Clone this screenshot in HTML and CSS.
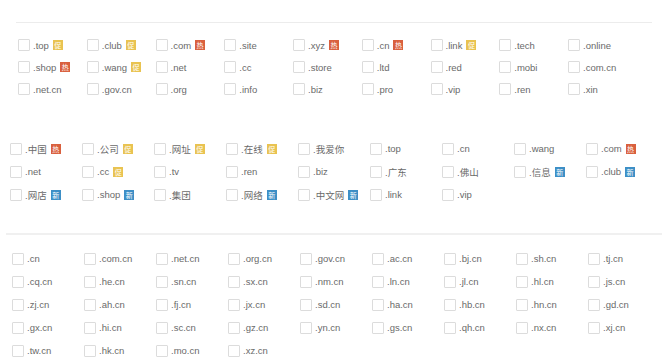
FILE: index.html
```html
<!DOCTYPE html>
<html lang="zh-CN">
<head>
  <meta charset="UTF-8">
  <title>域名后缀</title>
  <link rel="stylesheet" href="styles.css">
</head>
<body>
  <div class="sec sec-top">
    <div class="grid grid-top">
      <label class="item"><span class="box"></span>.top<i class="tag promo">促</i></label>
      <label class="item"><span class="box"></span>.club<i class="tag promo">促</i></label>
      <label class="item"><span class="box"></span>.com<i class="tag hot">热</i></label>
      <label class="item"><span class="box"></span>.site</label>
      <label class="item"><span class="box"></span>.xyz<i class="tag hot">热</i></label>
      <label class="item"><span class="box"></span>.cn<i class="tag hot">热</i></label>
      <label class="item"><span class="box"></span>.link<i class="tag promo">促</i></label>
      <label class="item"><span class="box"></span>.tech</label>
      <label class="item"><span class="box"></span>.online</label>

      <label class="item"><span class="box"></span>.shop<i class="tag hot">热</i></label>
      <label class="item"><span class="box"></span>.wang<i class="tag promo">促</i></label>
      <label class="item"><span class="box"></span>.net</label>
      <label class="item"><span class="box"></span>.cc</label>
      <label class="item"><span class="box"></span>.store</label>
      <label class="item"><span class="box"></span>.ltd</label>
      <label class="item"><span class="box"></span>.red</label>
      <label class="item"><span class="box"></span>.mobi</label>
      <label class="item"><span class="box"></span>.com.cn</label>

      <label class="item"><span class="box"></span>.net.cn</label>
      <label class="item"><span class="box"></span>.gov.cn</label>
      <label class="item"><span class="box"></span>.org</label>
      <label class="item"><span class="box"></span>.info</label>
      <label class="item"><span class="box"></span>.biz</label>
      <label class="item"><span class="box"></span>.pro</label>
      <label class="item"><span class="box"></span>.vip</label>
      <label class="item"><span class="box"></span>.ren</label>
      <label class="item"><span class="box"></span>.xin</label>
    </div>
  </div>

  <div class="sec sec-cn">
    <div class="grid grid-wide">
      <label class="item"><span class="box"></span>.中国<i class="tag hot">热</i></label>
      <label class="item"><span class="box"></span>.公司<i class="tag promo">促</i></label>
      <label class="item"><span class="box"></span>.网址<i class="tag promo">促</i></label>
      <label class="item"><span class="box"></span>.在线<i class="tag promo">促</i></label>
      <label class="item"><span class="box"></span>.我爱你</label>
      <label class="item"><span class="box"></span>.top</label>
      <label class="item"><span class="box"></span>.cn</label>
      <label class="item"><span class="box"></span>.wang</label>
      <label class="item"><span class="box"></span>.com<i class="tag hot">热</i></label>

      <label class="item"><span class="box"></span>.net</label>
      <label class="item"><span class="box"></span>.cc<i class="tag promo">促</i></label>
      <label class="item"><span class="box"></span>.tv</label>
      <label class="item"><span class="box"></span>.ren</label>
      <label class="item"><span class="box"></span>.biz</label>
      <label class="item"><span class="box"></span>.广东</label>
      <label class="item"><span class="box"></span>.佛山</label>
      <label class="item"><span class="box"></span>.信息<i class="tag new">新</i></label>
      <label class="item"><span class="box"></span>.club<i class="tag new">新</i></label>

      <label class="item"><span class="box"></span>.网店<i class="tag new">新</i></label>
      <label class="item"><span class="box"></span>.shop<i class="tag new">新</i></label>
      <label class="item"><span class="box"></span>.集团</label>
      <label class="item"><span class="box"></span>.网络<i class="tag new">新</i></label>
      <label class="item"><span class="box"></span>.中文网<i class="tag new">新</i></label>
      <label class="item"><span class="box"></span>.link</label>
      <label class="item"><span class="box"></span>.vip</label>
    </div>
  </div>

  <div class="sec sec-region">
    <div class="grid grid-wide">
      <label class="item"><span class="box"></span>.cn</label>
      <label class="item"><span class="box"></span>.com.cn</label>
      <label class="item"><span class="box"></span>.net.cn</label>
      <label class="item"><span class="box"></span>.org.cn</label>
      <label class="item"><span class="box"></span>.gov.cn</label>
      <label class="item"><span class="box"></span>.ac.cn</label>
      <label class="item"><span class="box"></span>.bj.cn</label>
      <label class="item"><span class="box"></span>.sh.cn</label>
      <label class="item"><span class="box"></span>.tj.cn</label>

      <label class="item"><span class="box"></span>.cq.cn</label>
      <label class="item"><span class="box"></span>.he.cn</label>
      <label class="item"><span class="box"></span>.sn.cn</label>
      <label class="item"><span class="box"></span>.sx.cn</label>
      <label class="item"><span class="box"></span>.nm.cn</label>
      <label class="item"><span class="box"></span>.ln.cn</label>
      <label class="item"><span class="box"></span>.jl.cn</label>
      <label class="item"><span class="box"></span>.hl.cn</label>
      <label class="item"><span class="box"></span>.js.cn</label>

      <label class="item"><span class="box"></span>.zj.cn</label>
      <label class="item"><span class="box"></span>.ah.cn</label>
      <label class="item"><span class="box"></span>.fj.cn</label>
      <label class="item"><span class="box"></span>.jx.cn</label>
      <label class="item"><span class="box"></span>.sd.cn</label>
      <label class="item"><span class="box"></span>.ha.cn</label>
      <label class="item"><span class="box"></span>.hb.cn</label>
      <label class="item"><span class="box"></span>.hn.cn</label>
      <label class="item"><span class="box"></span>.gd.cn</label>

      <label class="item"><span class="box"></span>.gx.cn</label>
      <label class="item"><span class="box"></span>.hi.cn</label>
      <label class="item"><span class="box"></span>.sc.cn</label>
      <label class="item"><span class="box"></span>.gz.cn</label>
      <label class="item"><span class="box"></span>.yn.cn</label>
      <label class="item"><span class="box"></span>.gs.cn</label>
      <label class="item"><span class="box"></span>.qh.cn</label>
      <label class="item"><span class="box"></span>.nx.cn</label>
      <label class="item"><span class="box"></span>.xj.cn</label>

      <label class="item"><span class="box"></span>.tw.cn</label>
      <label class="item"><span class="box"></span>.hk.cn</label>
      <label class="item"><span class="box"></span>.mo.cn</label>
      <label class="item"><span class="box"></span>.xz.cn</label>
    </div>
  </div>
</body>
</html>
```

FILE: styles.css
```css
body {
  margin: 0;
  background-color: #fff;
  font-family: "Liberation Sans", "Noto Sans CJK SC", sans-serif;
  font-size: 9.5px;
  color: #6a6a6a;
}
.sec-top {
  margin: 22px 10px 0 16px;
  border-top: 1px solid #ececec;
  padding: 11px 0 0 2px;
}
.sec-cn {
  margin-top: 37px;
  padding-left: 10px;
}
.sec-region {
  margin-top: 27px;
  margin-left: 6px;
  border-top: 2px solid #f0f0f0;
  padding: 12px 0 0 6px;
}
.grid {
  display: grid;
}
.grid-top {
  grid-template-columns: repeat(9, 68.75px);
  grid-auto-rows: 22px;
}
.grid-wide {
  grid-template-columns: repeat(9, 72px);
  grid-auto-rows: 23px;
}
.item {
  display: flex;
  align-items: center;
  white-space: nowrap;
}
.box {
  width: 10px;
  height: 10px;
  border: 1px solid #dcdcdc;
  border-radius: 1px;
  margin-right: 3px;
  flex-shrink: 0;
}
.tag {
  width: 10px;
  height: 10px;
  margin-left: 4px;
  font-style: normal;
  font-size: 7px;
  line-height: 10px;
  text-align: center;
  color: #fff;
  font-family: "Noto Sans CJK SC", sans-serif;
}
.hot {
  background-color: #d9603e;
}
.promo {
  background-color: #e9c351;
}
.new {
  background-color: #3d8fc6;
}
```
